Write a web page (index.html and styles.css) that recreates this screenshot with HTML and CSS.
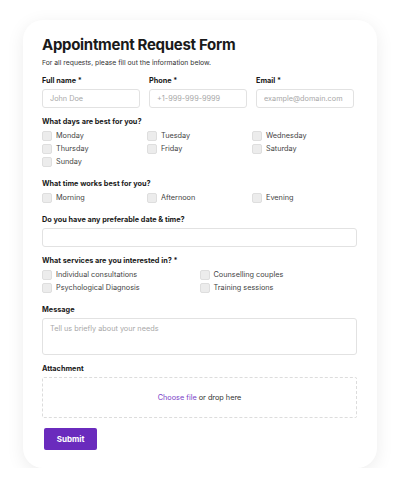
FILE: index.html
```html
<!DOCTYPE html>
<html lang="en">
<head>
    <meta charset="UTF-8">
    <meta name="viewport" content="width=device-width, initial-scale=1.0">
    <title>Appointment Request Form</title>
    <link rel="stylesheet" href="styles.css">
</head>
<body>

    <form class="card">
        <h1>Appointment Request Form</h1>
        <p class="intro">For all requests, please fill out the information below.</p>

        <div class="row-three">
            <div class="field">
                <label for="name">Full name *</label>
                <input type="text" id="name" placeholder="John Doe">
            </div>
            <div class="field">
                <label for="phone">Phone *</label>
                <input type="text" id="phone" placeholder="+1-999-999-9999">
            </div>
            <div class="field">
                <label for="email">Email *</label>
                <input type="text" id="email" placeholder="example@domain.com">
            </div>
        </div>

        <div class="group">
            <div class="label">What days are best for you?</div>
            <div class="checks cols-3">
                <label class="check"><span class="box"></span>Monday</label>
                <label class="check"><span class="box"></span>Tuesday</label>
                <label class="check"><span class="box"></span>Wednesday</label>
                <label class="check"><span class="box"></span>Thursday</label>
                <label class="check"><span class="box"></span>Friday</label>
                <label class="check"><span class="box"></span>Saturday</label>
                <label class="check"><span class="box"></span>Sunday</label>
            </div>
        </div>

        <div class="group">
            <div class="label">What time works best for you?</div>
            <div class="checks cols-3">
                <label class="check"><span class="box"></span>Morning</label>
                <label class="check"><span class="box"></span>Afternoon</label>
                <label class="check"><span class="box"></span>Evening</label>
            </div>
        </div>

        <div class="group">
            <label class="label" for="when">Do you have any preferable date &amp; time?</label>
            <input type="text" id="when" class="wide">
        </div>

        <div class="group">
            <div class="label">What services are you interested in? *</div>
            <div class="checks cols-2">
                <label class="check"><span class="box"></span>Individual consultations</label>
                <label class="check"><span class="box"></span>Counselling couples</label>
                <label class="check"><span class="box"></span>Psychological Diagnosis</label>
                <label class="check"><span class="box"></span>Training sessions</label>
            </div>
        </div>

        <div class="group">
            <label class="label" for="message">Message</label>
            <textarea id="message" placeholder="Tell us briefly about your needs"></textarea>
        </div>

        <div class="group">
            <div class="label">Attachment</div>
            <div class="drop"><a href="#">Choose file</a> or drop here</div>
        </div>

        <button type="button" class="submit">Submit</button>
    </form>

</body>
</html>
```

FILE: styles.css
```css
body {
    margin: 0;
    background: #ffffff;
    font-family: Inter, "Noto Sans", sans-serif;
    color: #1a1a1a;
}

.card {
    width: 354px;
    margin: 20px 0 0 23px;
    padding: 16px 20px 18px 19px;
    box-sizing: border-box;
    background: #ffffff;
    border-radius: 20px;
    box-shadow: 0 4px 18px rgba(0, 0, 0, 0.08);
}

h1 {
    margin: 0;
    font-size: 15px;
    font-weight: 700;
    line-height: 18px;
    letter-spacing: -0.3px;
}

.intro {
    margin: 3px 0 0;
    font-size: 6.8px;
    line-height: 12px;
    color: #333;
}

.row-three {
    display: grid;
    grid-template-columns: repeat(3, 98px);
    column-gap: 9px;
    margin-top: 6px;
}

label, .label {
    display: block;
    font-size: 7.3px;
    font-weight: 700;
    line-height: 12px;
    margin-bottom: 2px;
}

input, textarea {
    display: block;
    width: 100%;
    box-sizing: border-box;
    height: 19px;
    padding: 0 7px;
    border: 1px solid #e2e2e2;
    border-radius: 3px;
    font-family: inherit;
    font-size: 7.3px;
    color: #333;
    outline: none;
}

input::placeholder, textarea::placeholder {
    color: #a8a8a8;
}

.group {
    margin-top: 8px;
}

.checks {
    display: grid;
    margin-top: -0.5px;
    padding-bottom: 1.5px;
}

.cols-3 {
    grid-template-columns: repeat(3, 1fr);
}

.cols-2 {
    grid-template-columns: repeat(2, 1fr);
}

.check {
    display: flex;
    align-items: center;
    height: 13px;
    font-weight: 400;
    color: #444;
    margin: 0;
}

.box {
    width: 8px;
    height: 8px;
    margin-right: 4px;
    border: 1px solid #dedede;
    border-radius: 2px;
    background: #ececec;
}

textarea {
    height: 37px;
    padding: 5px 7px;
    resize: none;
}

.drop {
    height: 39px;
    border: 1px dashed #dcdcdc;
    border-radius: 2px;
    display: flex;
    align-items: center;
    justify-content: center;
    font-size: 7.3px;
    color: #333;
}

.drop a {
    color: #7b3fc9;
    text-decoration: none;
    margin-right: 2px;
}

.submit {
    display: block;
    margin: 10px 0 0 2px;
    width: 53px;
    height: 22px;
    border: none;
    border-radius: 2px;
    background: #6a2bbd;
    color: #ffffff;
    font-family: inherit;
    font-size: 8px;
    font-weight: 700;
    cursor: pointer;
}
```
